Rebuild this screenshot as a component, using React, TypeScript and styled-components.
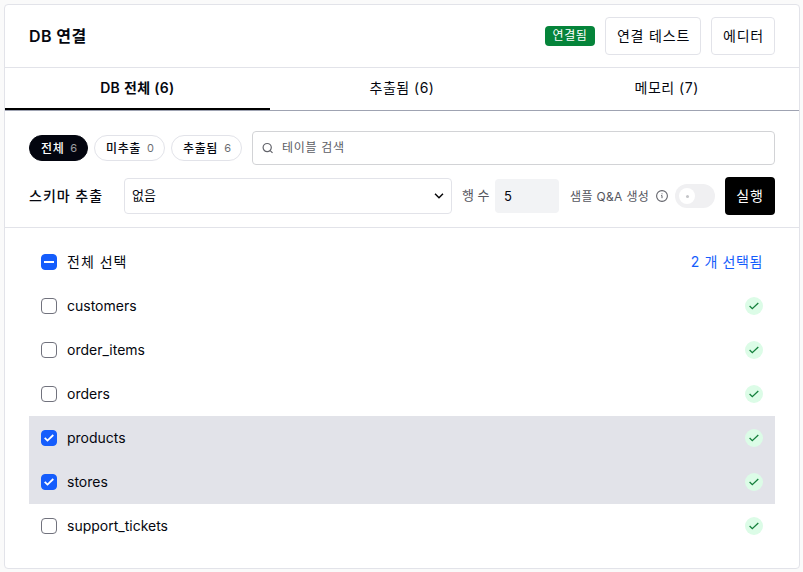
import { useState } from 'react';
import styled, { createGlobalStyle } from 'styled-components';

type FilterKey = 'all' | 'pending' | 'done';

const tabs = ['DB 전체 (6)', '추출됨 (6)', '메모리 (7)'];

const filters: { key: FilterKey; label: string; count: number }[] = [
    { key: 'all', label: '전체', count: 6 },
    { key: 'pending', label: '미추출', count: 0 },
    { key: 'done', label: '추출됨', count: 6 },
];

const tables = ['customers', 'order_items', 'orders', 'products', 'stores', 'support_tickets'];

const App = () => {
    const [tab, setTab] = useState(0);
    const [filter, setFilter] = useState<FilterKey>('all');
    const [selected, setSelected] = useState<string[]>(['products', 'stores']);

    const toggle = (name: string) =>
        setSelected((prev) => (prev.includes(name) ? prev.filter((item) => item !== name) : [...prev, name]));

    const toggleAll = () => setSelected(selected.length === tables.length ? [] : tables);

    return (
        <>
            <GlobalStyle />
            <Card>
                <Header>
                    <Title>DB 연결</Title>
                    <Badge>연결됨</Badge>
                    <OutlineButton $width={96}>연결 테스트</OutlineButton>
                    <OutlineButton $width={64}>에디터</OutlineButton>
                </Header>
                <TabList>
                    {tabs.map((label, index) => (
                        <Tab key={label} $active={tab === index} onClick={() => setTab(index)}>
                            {label}
                        </Tab>
                    ))}
                </TabList>
                <Toolbar>
                    <FilterRow>
                        <Chips>
                            {filters.map(({ key, label, count }) => (
                                <Chip
                                    key={key}
                                    $active={filter === key}
                                    $width={label.length > 2 ? 71 : 59}
                                    onClick={() => setFilter(key)}
                                >
                                    {label}
                                    <ChipCount>{count}</ChipCount>
                                </Chip>
                            ))}
                        </Chips>
                        <SearchBox>
                            <svg width='12' height='12' viewBox='0 0 12 12' fill='none' stroke='#63646b' strokeWidth='1.2'>
                                <circle cx='5.2' cy='5.6' r='4.1' />
                                <path d='M8.2 8.6l2.3 2.3' />
                            </svg>
                            <SearchInput placeholder='테이블 검색' />
                        </SearchBox>
                    </FilterRow>
                    <ExtractRow>
                        <ExtractLabel>스키마 추출</ExtractLabel>
                        <Select>
                            <span>없음</span>
                            <svg width='10' height='6' viewBox='0 0 10 6' fill='none' stroke='#09090b' strokeWidth='1.5'>
                                <path d='M1 .8l4 4 4-4' />
                            </svg>
                        </Select>
                        <RowLabel>행 수</RowLabel>
                        <NumberInput defaultValue='5' />
                        <SampleLabel>샘플 Q&amp;A 생성</SampleLabel>
                        <InfoIcon />
                        <Switch>
                            <Thumb />
                        </Switch>
                        <RunButton>실행</RunButton>
                    </ExtractRow>
                </Toolbar>
                <List>
                    <Row onClick={toggleAll}>
                        <Checkbox $checked={selected.length > 0}>
                            {selected.length === tables.length ? <CheckMark /> : selected.length > 0 && <Dash />}
                        </Checkbox>
                        <SelectAllLabel>전체 선택</SelectAllLabel>
                        <SelectedCount>{selected.length} 개 선택됨</SelectedCount>
                    </Row>
                    {tables.map((name) => {
                        const checked = selected.includes(name);
                        return (
                            <Row key={name} $selected={checked} onClick={() => toggle(name)}>
                                <Checkbox $checked={checked}>{checked && <CheckMark />}</Checkbox>
                                <RowName>{name}</RowName>
                                <Status>
                                    <svg width='10' height='8' viewBox='0 0 10 8' fill='none' stroke='#15803d' strokeWidth='1.3'>
                                        <path d='M.6 4l2.7 2.7L9.3 1' />
                                    </svg>
                                </Status>
                            </Row>
                        );
                    })}
                </List>
            </Card>
        </>
    );
};

export default App;

const CheckMark = () => (
    <svg width='10' height='8' viewBox='0 0 10 8' fill='none' stroke='#fff' strokeWidth='1.8'>
        <path d='M.7 3.8l2.8 2.8L9.3 1' />
    </svg>
);

const InfoIcon = () => (
    <InfoSvg width='12' height='12' viewBox='0 0 12 12' fill='none' stroke='#63646b'>
        <circle cx='6' cy='6' r='5.4' strokeWidth='1.1' />
        <path d='M5.2 5.5H6V8.2' strokeWidth='1' />
        <path d='M5.5 3.8h1' strokeWidth='.9' />
    </InfoSvg>
);

const GlobalStyle = createGlobalStyle`
    * {
        box-sizing: border-box;
    }
    body {
        margin: 0;
        padding: 4px;
        background: #fafafa;
        color: #05070f;
        font-family: Inter, 'Noto Sans CJK KR', sans-serif;
        font-size: 14px;
    }
    button, input {
        font-family: inherit;
        color: inherit;
    }
    button {
        padding: 0;
        cursor: pointer;
        white-space: nowrap;
    }
`;

const Card = styled.div`
    width: 796px;
    height: 565px;
    background: #fff;
    border: 1px solid #e2e3e9;
    border-radius: 4px;
    overflow: hidden;
`;

const Header = styled.header`
    display: flex;
    align-items: center;
    gap: 10px;
    height: 63px;
    padding: 0 24px;
    border-bottom: 1px solid #e2e3e9;
`;

const Title = styled.h1`
    flex: 1;
    margin: 0;
    padding-bottom: 2px;
    font-size: 16px;
    font-weight: 600;
    letter-spacing: 0.4px;
`;

const Badge = styled.span`
    width: 50px;
    height: 20px;
    border-radius: 4px;
    background: #05843a;
    color: #fff;
    font-size: 12px;
    line-height: 20px;
    letter-spacing: 0.6px;
    text-align: center;
`;

const OutlineButton = styled.button<{ $width: number }>`
    width: ${({ $width }) => $width}px;
    height: 38px;
    padding: 0 0 2px 1px;
    border: 1px solid #e2e3e9;
    border-radius: 4px;
    background: #fff;
    font-size: 14px;
    letter-spacing: 0.8px;
`;

const TabList = styled.nav`
    display: grid;
    grid-template-columns: repeat(3, 1fr);
    height: 43px;
    border-bottom: 1px solid #9fa3b2;
`;

const Tab = styled.button<{ $active: boolean }>`
    padding-bottom: 2px;
    border: none;
    border-bottom: 2px solid ${({ $active }) => ($active ? '#000' : 'transparent')};
    background: none;
    font-size: 14px;
    font-weight: ${({ $active }) => ($active ? 600 : 400)};
    letter-spacing: ${({ $active }) => ($active ? 0.3 : 0.5)}px;
`;

const Toolbar = styled.section`
    display: flex;
    flex-direction: column;
    gap: 12px;
    height: 117px;
    padding: 20px 24px 12px;
    border-bottom: 1px solid #e2e3e9;
`;

const FilterRow = styled.div`
    display: flex;
    align-items: center;
    gap: 10px;
`;

const Chips = styled.div`
    display: flex;
    gap: 6px;
`;

const Chip = styled.button<{ $active: boolean; $width: number }>`
    display: flex;
    align-items: center;
    justify-content: space-between;
    width: ${({ $width }) => $width}px;
    height: 26px;
    padding: 0 10px 2px 11px;
    border: 1px solid ${({ $active }) => ($active ? '#03050f' : '#e2e3e9')};
    border-radius: 13px;
    background: ${({ $active }) => ($active ? '#03050f' : '#fff')};
    color: ${({ $active }) => ($active ? '#fff' : '#05070f')};
    font-size: 12px;
    font-weight: 500;
    letter-spacing: 0.6px;
`;

const ChipCount = styled.span`
    padding-top: 2px;
    font-size: 11px;
    font-weight: 400;
    letter-spacing: 0;
    opacity: 0.6;
`;

const SearchBox = styled.label`
    display: flex;
    flex: 1;
    align-items: center;
    gap: 8px;
    height: 34px;
    padding: 0 9px;
    border: 1px solid #d2d3d6;
    border-radius: 4px;
`;

const SearchInput = styled.input`
    flex: 1;
    padding: 0 0 2px;
    border: none;
    outline: none;
    font-size: 12px;
    letter-spacing: 0.7px;
    &::placeholder {
        color: #5c5d64;
        opacity: 1;
    }
`;

const ExtractRow = styled.div`
    display: flex;
    align-items: center;
    height: 38px;
`;

const ExtractLabel = styled.span`
    width: 95px;
    padding-bottom: 3px;
    font-size: 14px;
    font-weight: 500;
    letter-spacing: 1px;
`;

const Select = styled.div`
    display: flex;
    align-items: center;
    justify-content: space-between;
    width: 328px;
    height: 36px;
    padding: 0 7px;
    border: 1px solid #e2e3e9;
    border-radius: 4px;
    font-size: 13px;
    span {
        padding-bottom: 3px;
    }
`;

const RowLabel = styled.span`
    width: 43px;
    padding: 0 0 3px 10px;
    color: #55565e;
    font-size: 13px;
    white-space: nowrap;
`;

const NumberInput = styled.input`
    width: 64px;
    height: 34px;
    padding: 0 9px;
    border: none;
    border-radius: 4px;
    background: #f2f3f5;
    font-size: 13px;
`;

const SampleLabel = styled.span`
    width: 97px;
    padding: 0 0 2px 11px;
    color: #55565e;
    font-size: 12px;
    letter-spacing: 0.35px;
    white-space: nowrap;
`;

const InfoSvg = styled.svg`
    flex-shrink: 0;
    margin-right: 7px;
`;

const Switch = styled.span`
    display: flex;
    align-items: center;
    width: 40px;
    height: 24px;
    margin-right: 10px;
    padding: 0 4px;
    border-radius: 12px;
    background: #f0f0f2;
`;

const Thumb = styled.span`
    display: flex;
    align-items: center;
    justify-content: center;
    width: 16px;
    height: 16px;
    border-radius: 50%;
    background: #fff;
    &::after {
        content: '';
        width: 3px;
        height: 3px;
        border-radius: 50%;
        background: #c4c5c8;
    }
`;

const RunButton = styled.button`
    width: 50px;
    height: 38px;
    padding-bottom: 2px;
    border: none;
    border-radius: 4px;
    background: #000;
    color: #fff;
    font-size: 14px;
    letter-spacing: 0.8px;
`;

const List = styled.section`
    padding: 12px 24px;
`;

const Row = styled.div<{ $selected?: boolean }>`
    display: flex;
    align-items: center;
    gap: 10px;
    height: 44px;
    padding: 0 12px;
    background: ${({ $selected }) => ($selected ? '#e2e3e9' : 'transparent')};
    cursor: pointer;
`;

const Checkbox = styled.span<{ $checked: boolean }>`
    display: flex;
    align-items: center;
    justify-content: center;
    width: 16px;
    height: 16px;
    border: 1px solid ${({ $checked }) => ($checked ? '#155dfc' : '#71727d')};
    border-radius: 4px;
    background: ${({ $checked }) => ($checked ? '#155dfc' : '#fff')};
`;

const Dash = styled.span`
    width: 10px;
    height: 2px;
    background: #fff;
`;

const RowName = styled.span`
    flex: 1;
    padding-bottom: 1px;
    font-size: 14px;
`;

const SelectAllLabel = styled(RowName)`
    padding-bottom: 2px;
    letter-spacing: 1px;
`;

const SelectedCount = styled.span`
    padding-bottom: 2px;
    color: #155dfc;
    font-size: 14px;
    letter-spacing: 0.6px;
`;

const Status = styled.span`
    display: flex;
    align-items: center;
    justify-content: center;
    width: 18px;
    height: 18px;
    border-radius: 50%;
    background: #dcfce7;
`;
